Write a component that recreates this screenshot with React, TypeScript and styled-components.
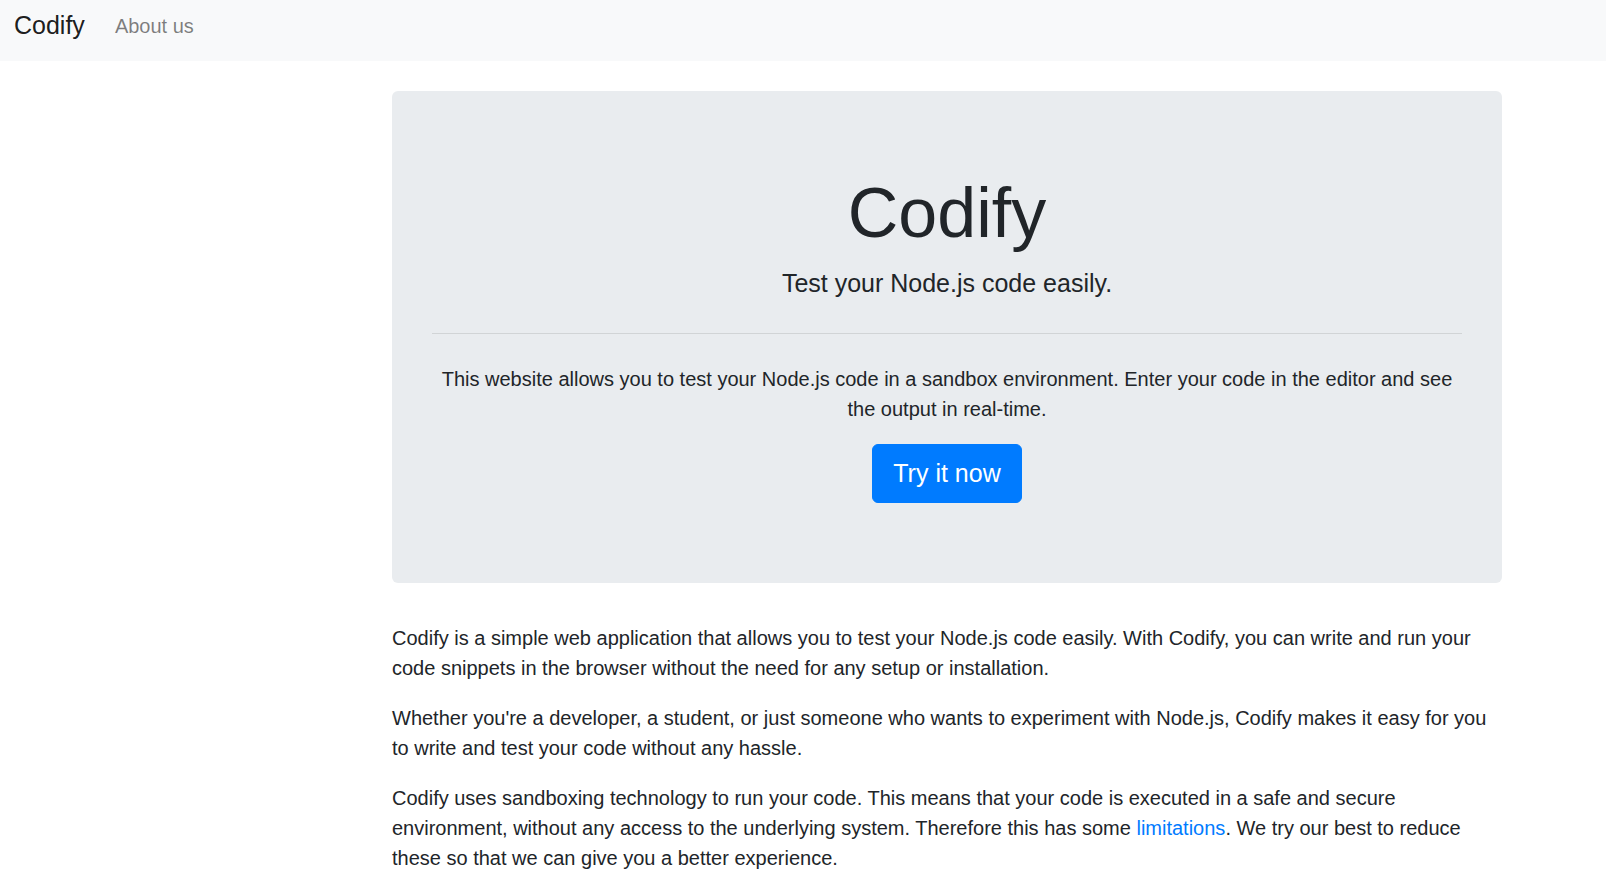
import React from "react";
import styled, { createGlobalStyle } from "styled-components";

const GlobalStyle = createGlobalStyle`
    * {
        box-sizing: border-box;
    }
    body {
        margin: 0;
        font-family: "Liberation Sans", Arial, sans-serif;
        font-size: 20px;
        line-height: 1.5;
        color: #212529;
        background: #ffffff;
    }
`;

const Navbar = styled.nav`
    height: 61px;
    display: flex;
    align-items: flex-start;
    padding: 7px 14px 0;
    background-color: #f8f9fa;
    margin-bottom: 30px;
`;

const Brand = styled.a`
    font-size: 25px;
    line-height: 1.5;
    color: rgba(0, 0, 0, 0.9);
    text-decoration: none;
    margin-right: 20px;
`;

const NavLink = styled.a`
    font-size: 20px;
    line-height: 1.5;
    padding: 4px 10px 0;
    color: rgba(0, 0, 0, 0.5);
    text-decoration: none;
`;

const Main = styled.main`
    margin-left: 392px;
    width: 1110px;
`;

const Jumbotron = styled.section`
    padding: 80px 40px;
    margin-bottom: 40px;
    background-color: #e9ecef;
    border-radius: 6px;
    text-align: center;
`;

const Title = styled.h1`
    margin: 0 0 10px;
    font-size: 70px;
    font-weight: 400;
    line-height: 1.2;
`;

const Lead = styled.p`
    margin: 0;
    font-size: 25px;
    font-weight: 400;
    line-height: 1.5;
`;

const Divider = styled.hr`
    margin: 30px 0;
    border: 0;
    border-top: 1px solid rgba(0, 0, 0, 0.1);
`;

const Text = styled.p`
    margin: 0 0 20px;
`;

const Button = styled.a`
    display: inline-block;
    padding: 10px 20px;
    font-size: 25px;
    line-height: 1.5;
    color: #ffffff;
    background-color: #007bff;
    border: 1px solid #007bff;
    border-radius: 6px;
    text-decoration: none;
    cursor: pointer;
`;

const ButtonRow = styled.div`
    display: flex;
    justify-content: center;
`;

const Link = styled.a`
    color: #007bff;
    text-decoration: none;
`;

const App: React.FC = () => {
    return (
        <>
            <GlobalStyle />
            <Navbar>
                <Brand href="#">Codify</Brand>
                <NavLink href="#">About us</NavLink>
            </Navbar>
            <Main>
                <Jumbotron>
                    <Title>Codify</Title>
                    <Lead>Test your Node.js code easily.</Lead>
                    <Divider />
                    <Text>
                        This website allows you to test your Node.js code in a sandbox environment. Enter your code in the
                        editor and see the output in real-time.
                    </Text>
                    <ButtonRow>
                        <Button href="#">Try it now</Button>
                    </ButtonRow>
                </Jumbotron>

                <Text>
                    Codify is a simple web application that allows you to test your Node.js code easily. With Codify, you
                    can write and run your code snippets in the browser without the need for any setup or installation.
                </Text>
                <Text>
                    Whether you're a developer, a student, or just someone who wants to experiment with Node.js, Codify
                    makes it easy for you to write and test your code without any hassle.
                </Text>
                <Text>
                    Codify uses sandboxing technology to run your code. This means that your code is executed in a safe
                    and secure environment, without any access to the underlying system. Therefore this has some{" "}
                    <Link href="#">limitations</Link>. We try our best to reduce these so that we can give you a better
                    experience.
                </Text>
            </Main>
        </>
    );
};

export default App;
